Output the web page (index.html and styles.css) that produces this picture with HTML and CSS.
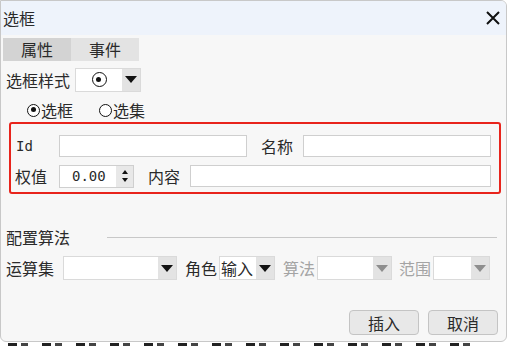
FILE: index.html
```html
<!DOCTYPE html>
<html lang="zh">
<head>
    <meta charset="UTF-8">
    <title>选框</title>
    <link rel="stylesheet" href="styles.css">
</head>
<body>
    <div class="dialog">
        <div class="titlebar">
            <span class="title">选框</span>
            <svg class="close" width="14" height="14" viewBox="0 0 14 14">
                <path d="M1 1 L13 13 M13 1 L1 13" stroke="#111" stroke-width="2" fill="none"/>
            </svg>
        </div>
        <div class="tabs">
            <div class="tab active">属性</div>
            <div class="tab">事件</div>
        </div>
        <div class="style-row">
            <span class="label">选框样式</span>
            <div class="combo style-combo">
                <div class="combo-value"><span class="radio big checked"></span></div>
                <div class="combo-arrow"><span class="tri"></span></div>
            </div>
        </div>
        <div class="radio-row">
            <label class="radio-item"><span class="radio checked"></span>选框</label>
            <label class="radio-item"><span class="radio"></span>选集</label>
        </div>
        <div class="redbox">
            <div class="field-row">
                <span class="flabel mono">Id</span>
                <div class="input w188"></div>
                <span class="flabel gap">名称</span>
                <div class="input w188"></div>
            </div>
            <div class="field-row">
                <span class="flabel">权值</span>
                <div class="spinner">
                    <span class="spin-value mono">0.00</span>
                    <div class="spin-btns">
                        <span class="tri up"></span>
                        <span class="tri small"></span>
                    </div>
                </div>
                <span class="flabel gap">内容</span>
                <div class="input w301"></div>
            </div>
        </div>
        <div class="group-head">
            <span>配置算法</span>
            <div class="rule"></div>
        </div>
        <div class="algo-row">
            <span class="alabel first">运算集</span>
            <div class="combo c-set">
                <div class="combo-value"></div>
                <div class="combo-arrow"><span class="tri"></span></div>
            </div>
            <span class="alabel">角色</span>
            <div class="combo c-role">
                <div class="combo-value">输入</div>
                <div class="combo-arrow"><span class="tri"></span></div>
            </div>
            <span class="alabel muted">算法</span>
            <div class="combo c-algo disabled">
                <div class="combo-value"></div>
                <div class="combo-arrow"><span class="tri"></span></div>
            </div>
            <span class="alabel muted">范围</span>
            <div class="combo c-range disabled">
                <div class="combo-value"></div>
                <div class="combo-arrow"><span class="tri"></span></div>
            </div>
        </div>
        <div class="actions">
            <button class="btn">插入</button>
            <button class="btn">取消</button>
        </div>
    </div>
    <!-- window behind the dialog, only its top edge shows -->
    <div class="behind"></div>
</body>
</html>
```

FILE: styles.css
```css
* {
    margin: 0;
    padding: 0;
    box-sizing: border-box;
}

body {
    background: #fff;
    font-family: "Noto Sans CJK SC", "Noto Sans", sans-serif;
    font-size: 16px;
    color: #2a2a2a;
    width: 509px;
    height: 346px;
    overflow: hidden;
}

.dialog {
    width: 507px;
    height: 342px;
    border: 1px solid #c8c8c8;
    border-radius: 0 6px 6px 6px;
    background: #f7f7f7;
    display: flex;
    flex-direction: column;
    overflow: hidden;
}

.titlebar {
    height: 34px;
    background: #eef3fb;
    display: flex;
    align-items: center;
    justify-content: space-between;
    padding: 0 6px 0 2px;
    flex-shrink: 0;
}

.title {
    font-size: 16px;
    line-height: 20px;
}

.tabs {
    display: flex;
    margin: 3px 0 0 2px;
}

.tab {
    width: 68px;
    height: 23px;
    line-height: 23px;
    text-align: center;
    background: #e3e3e3;
    font-size: 16px;
}

.tab.active {
    background: #d3d3d3;
}

.style-row {
    display: flex;
    align-items: center;
    margin: 6px 0 0 5px;
    height: 25px;
}

.label {
    width: 69px;
    line-height: 20px;
}

.combo {
    display: flex;
    height: 24px;
    background: #fff;
    border: 1px solid #dadada;
}

.combo-value {
    flex: 1;
    display: flex;
    align-items: center;
    justify-content: center;
    font-size: 16px;
    line-height: 20px;
}

.combo-arrow {
    width: 18px;
    background: #e3e3e3;
    display: flex;
    align-items: center;
    justify-content: center;
}

.tri {
    width: 0;
    height: 0;
    border-left: 6px solid transparent;
    border-right: 6px solid transparent;
    border-top: 7px solid #111;
}

.style-combo {
    width: 66px;
}

.radio {
    display: inline-block;
    width: 13px;
    height: 13px;
    border: 1.5px solid #111;
    border-radius: 50%;
    position: relative;
    background: #fff;
}

.radio.checked::after {
    content: "";
    position: absolute;
    left: 2.5px;
    top: 2.5px;
    width: 5px;
    height: 5px;
    border-radius: 50%;
    background: #111;
}

.radio.big {
    width: 15px;
    height: 15px;
}

.radio.big::after {
    left: 3.5px;
    top: 3.5px;
}

.radio-row {
    display: flex;
    margin: 9px 0 0 26px;
    height: 18px;
    align-items: center;
    gap: 26px;
}

.radio-item {
    display: flex;
    align-items: center;
    line-height: 18px;
}

.radio-item .radio {
    margin-right: 1px;
}

.redbox {
    margin: 3px 0 0 8px;
    width: 492px;
    height: 72px;
    border: 2px solid #e8241c;
    border-radius: 3px;
    padding: 11px 0 0 3px;
    display: flex;
    flex-direction: column;
    gap: 8px;
}

.field-row {
    display: flex;
    align-items: center;
    height: 22px;
}

.flabel {
    width: 45px;
    line-height: 20px;
    padding-left: 1px;
}

.flabel.mono {
    padding-left: 2px;
}

.flabel.gap {
    width: 43px;
    margin-left: 13px;
}

.mono {
    font-family: "DejaVu Sans Mono", "Liberation Mono", monospace;
    font-size: 14px;
}

.input {
    height: 22px;
    background: #fff;
    border: 1px solid #cfcfcf;
}

.w188 {
    width: 188px;
}

.w301 {
    width: 301px;
}

.spinner {
    width: 75px;
    height: 23px;
    background: #fff;
    border: 1px solid #cfcfcf;
    display: flex;
}

.spin-value {
    flex: 1;
    padding-left: 12px;
    line-height: 21px;
}

.spin-btns {
    width: 17px;
    background: #e8e8e8;
    display: flex;
    flex-direction: column;
    align-items: center;
    justify-content: center;
    gap: 4px;
}

.spin-btns .tri {
    border-left-width: 3px;
    border-right-width: 3px;
    border-top-width: 4px;
}

.spin-btns .tri.up {
    border-top: none;
    border-bottom: 4px solid #111;
}

.group-head {
    display: flex;
    align-items: center;
    margin: 33px 0 0 5px;
    height: 20px;
}

.group-head span {
    line-height: 20px;
}

.rule {
    margin-left: 37px;
    width: 390px;
    height: 1px;
    background: #c8c8c8;
}

.algo-row {
    display: flex;
    align-items: center;
    margin: 9px 0 0 5px;
    height: 24px;
}

.alabel {
    line-height: 20px;
    margin-right: 2px;
}

.alabel.first {
    margin-right: 9px;
}

.alabel.muted {
    color: #a4a4a4;
}

.c-set {
    width: 114px;
    margin-right: 8px;
}

.c-role {
    width: 56px;
    margin-right: 8px;
}

.c-role .combo-value {
    justify-content: flex-start;
    padding-left: 1px;
}

.c-algo {
    width: 75px;
    margin-right: 7px;
}

.c-range {
    width: 57px;
}

.disabled .tri {
    border-top-color: #8e8e8e;
}

.actions {
    margin-top: auto;
    display: flex;
    justify-content: flex-end;
    gap: 9px;
    padding: 0 8px 6px 0;
}

.btn {
    width: 70px;
    height: 25px;
    border: 1px solid #c4c4c4;
    border-radius: 4px;
    background: #e8e8e8;
    font-family: "Noto Sans CJK SC", sans-serif;
    font-size: 16px;
    color: #2a2a2a;
}

.behind {
    height: 3px;
    margin: 1px 0 0 8px;
    width: 470px;
    background: repeating-linear-gradient(90deg, #222 0 9px, transparent 9px 13px, #444 13px 20px, transparent 20px 34px);
}
```
